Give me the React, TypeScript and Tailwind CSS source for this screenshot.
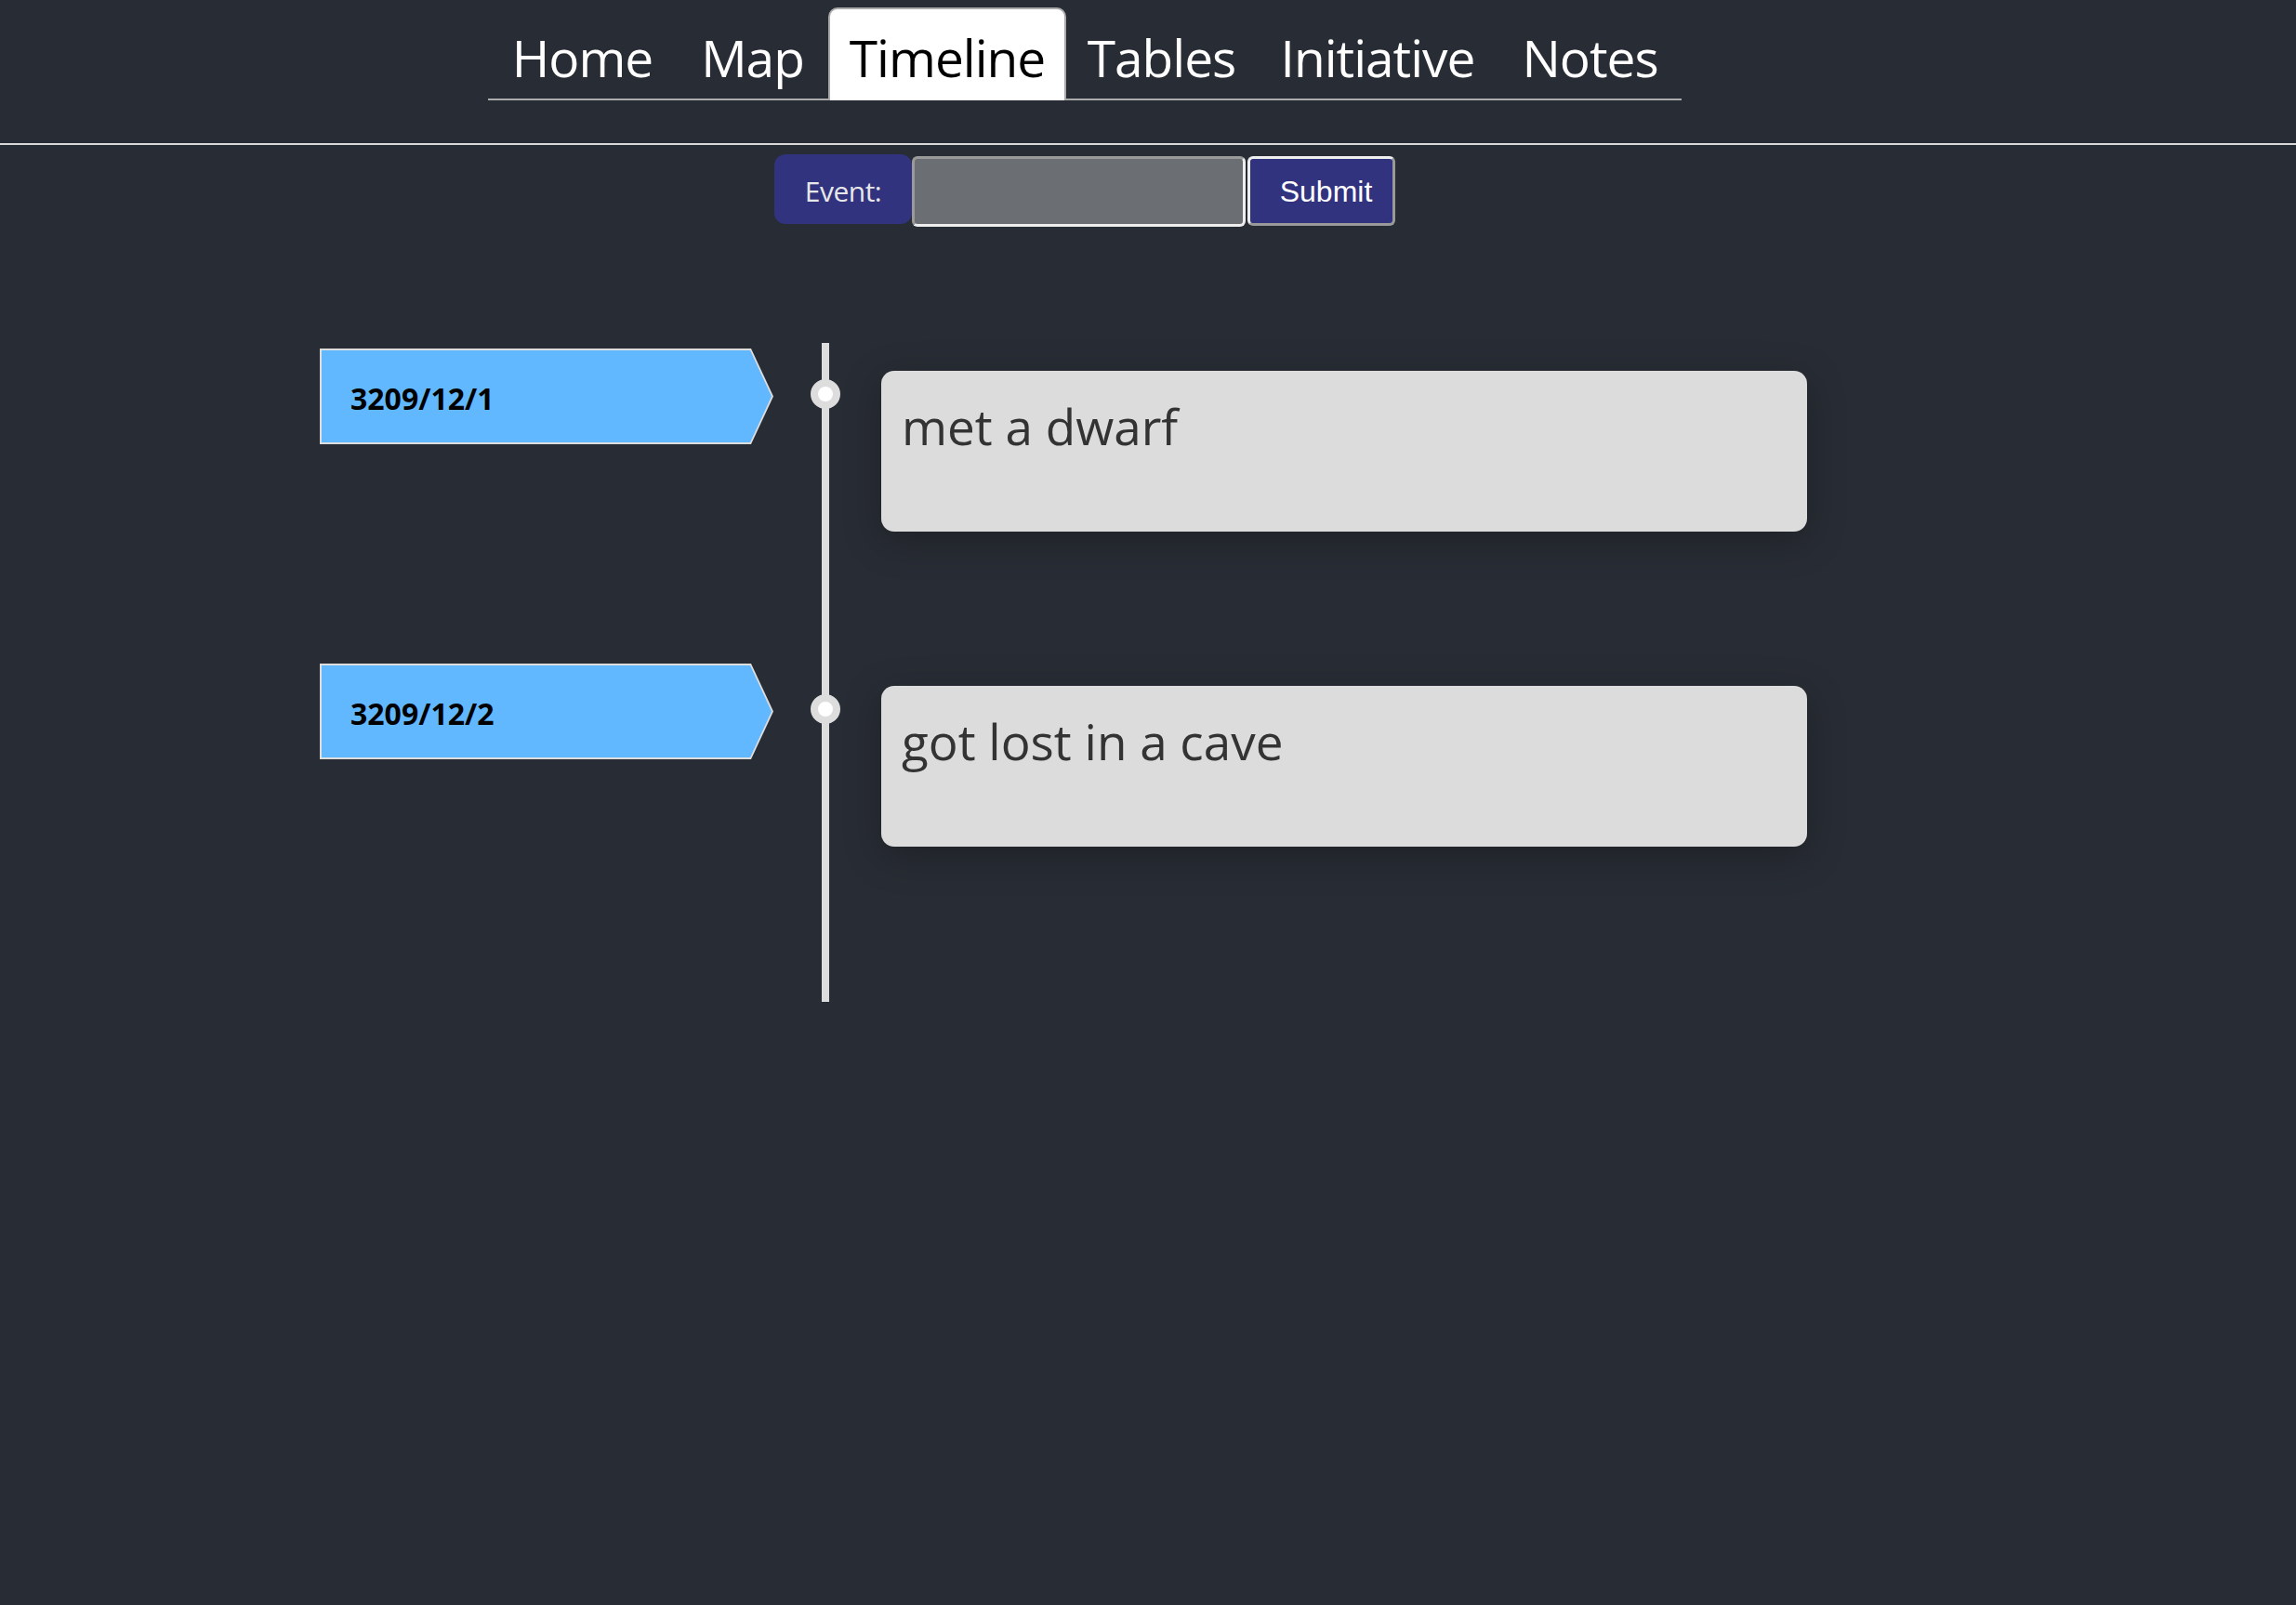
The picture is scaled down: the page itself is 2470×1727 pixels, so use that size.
import React from "react";

const tabs = [
  { label: "Home", w: "w-[203px]" },
  { label: "Map", w: "w-[163px]" },
  { label: "Timeline", w: "w-[256px]", active: true },
  { label: "Tables", w: "w-[205px]" },
  { label: "Initiative", w: "w-[260px]" },
  { label: "Notes", w: "w-[197px]" },
];

const events = [
  { date: "3209/12/1", text: "met a dwarf" },
  { date: "3209/12/2", text: "got lost in a cave" },
];

function DateTag({ date }: { date: string }) {
  return (
    <div className="w-[488px] h-[103px] p-[2px] bg-[#dddddd] [clip-path:polygon(0_0,calc(100%_-_24px)_0,100%_50%,calc(100%_-_24px)_100%,0_100%)]">
      <div className="h-full bg-[#61b8ff] flex items-center pl-[31px] pt-[5px] [clip-path:polygon(0_0,calc(100%_-_23px)_0,100%_50%,calc(100%_-_23px)_100%,0_100%)]">
        <span className="text-[32px] font-bold text-black">{date}</span>
      </div>
    </div>
  );
}

export default function App() {
  return (
    <div className="min-h-screen bg-[#282c34] font-['Open_Sans','Noto_Sans',sans-serif]">
      {/* nav */}
      <div className="pr-[136px] flex justify-center pt-[8px]">
        <ul className="flex">
          {tabs.map((t) => (
            <li
              key={t.label}
              className={`${t.w} h-[100px] flex justify-center text-[55px] tracking-[-1px] leading-[75px] ${
                t.active
                  ? "bg-white text-black border-2 border-b-0 border-[#aaaaaa] rounded-t-[10px] pt-[14px]"
                  : "text-white border-b-2 border-[#aaaaaa] pt-[16px]"
              }`}
            >
              {t.label}
            </li>
          ))}
        </ul>
      </div>

      <div className="mt-[46px] h-[2px] bg-[#d8d8d8]" />

      {/* form */}
      <div className="pr-[136px] flex justify-center items-start mt-[10px]">
        <div className="w-[148px] h-[75px] bg-[#32337f] rounded-[12px] flex items-center justify-center pt-[3px] text-[30px] tracking-[-0.5px] text-[#e8e8e8]">
          Event:
        </div>
        <input
          className="mt-[2px] w-[359px] h-[76px] bg-[#6b6e72] rounded-[6px] border-[3px] border-t-[#9a9a9a] border-l-[#9a9a9a] border-b-[#eeeeee] border-r-[#eeeeee] outline-none"
          type="text"
        />
        <button className="mt-[2px] ml-[2px] w-[159px] h-[75px] bg-[#32337f] rounded-[6px] border-[3px] border-t-[#eeeeee] border-l-[#eeeeee] border-b-[#9a9a9a] border-r-[#9a9a9a] text-white text-[32px] font-['Liberation_Sans',Arial,sans-serif] pl-[10px]">
          Submit
        </button>
      </div>

      {/* timeline */}
      <div className="mt-[125px] ml-[344px]">
        {events.map((e) => (
          <div key={e.date} className="flex h-[339px]">
            <div className="w-[540px] pt-[6px]">
              <DateTag date={e.date} />
            </div>
            <div className="w-[8px] bg-[#dddddd] flex justify-center">
              <div className="shrink-0 mt-[39px] w-[32px] h-[32px] rounded-full border-[8px] border-[#dddddd] bg-white" />
            </div>
            <div className="pl-[56px] pt-[30px]">
              <div className="w-[996px] h-[173px] bg-[#dcdcdc] rounded-[14px] shadow-[0_10px_40px_rgba(0,0,0,0.25)] pl-[22px] pt-[24px] text-[53px] text-[#333333] leading-[71px]">
                {e.text}
              </div>
            </div>
          </div>
        ))}
        <div className="flex">
          <div className="w-[540px]" />
          <div className="w-[8px] h-[31px] bg-[#dddddd]" />
        </div>
      </div>
    </div>
  );
}
